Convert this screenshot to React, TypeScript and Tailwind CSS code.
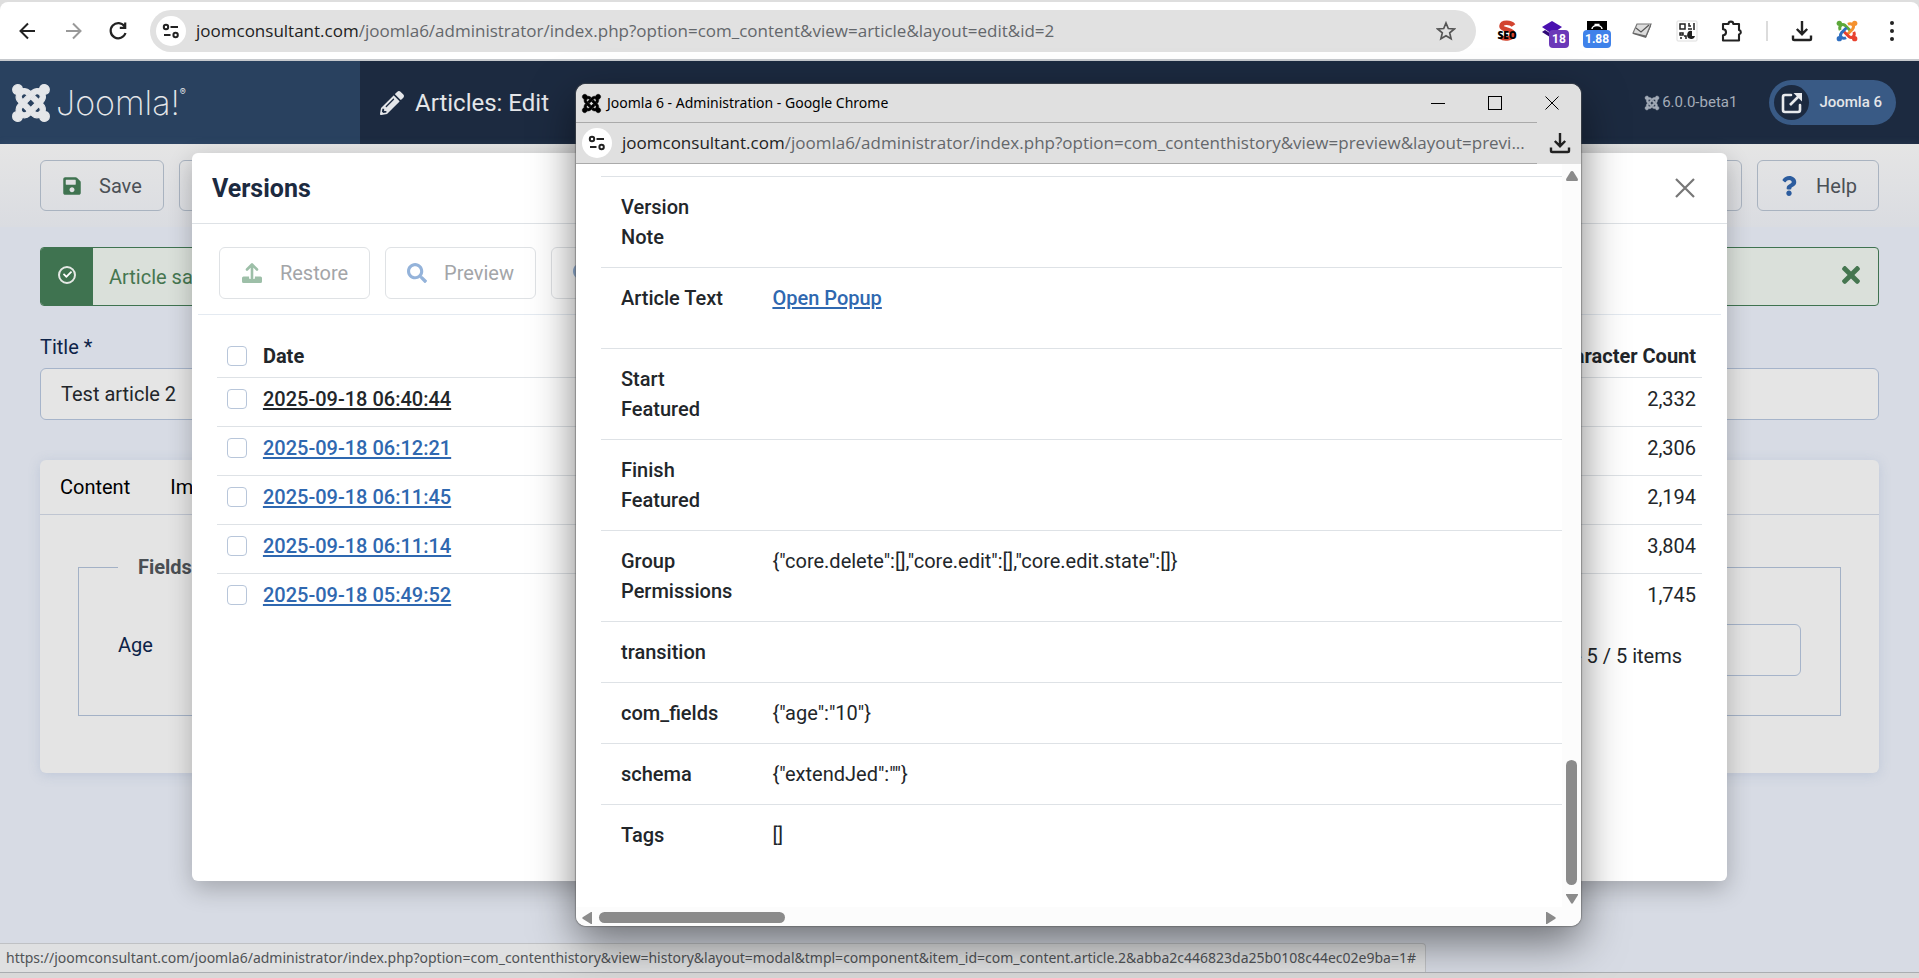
import type { ReactNode } from "react";
import { FaCheck, FaJoomla, FaPencilAlt, FaQuestion, FaSave, FaSearch, FaTimes } from "react-icons/fa";

const versions = [
  { date: "2025-09-18 06:40:44", count: "2,332", current: true },
  { date: "2025-09-18 06:12:21", count: "2,306" },
  { date: "2025-09-18 06:11:45", count: "2,194" },
  { date: "2025-09-18 06:11:14", count: "3,804" },
  { date: "2025-09-18 05:49:52", count: "1,745" },
];

const fields: { label: string; value?: ReactNode; tall?: boolean }[] = [
  { label: "Version Note" },
  {
    label: "Article Text",
    value: (
      <a href="#" className="font-medium text-[#2f68b0] underline decoration-2 underline-offset-2">
        Open Popup
      </a>
    ),
    tall: true,
  },
  { label: "Start Featured" },
  { label: "Finish Featured" },
  { label: "Group Permissions", value: '{"core.delete":[],"core.edit":[],"core.edit.state":[]}' },
  { label: "transition" },
  { label: "com_fields", value: '{"age":"10"}' },
  { label: "schema", value: '{"extendJed":""}' },
  { label: "Tags", value: "[]" },
];

function TuneIcon() {
  return (
    <span className="flex size-[30px] shrink-0 items-center justify-center rounded-full bg-white">
      <svg viewBox="0 0 18 18" className="size-[18px]" fill="none" stroke="#222" strokeWidth="2">
        <circle cx="4" cy="5" r="2.2" />
        <path d="M8.5 5H16M2 13h6.5" />
        <circle cx="13.6" cy="13" r="2.2" />
      </svg>
    </span>
  );
}

function DownloadIcon() {
  return (
    <svg viewBox="0 0 22 22" className="size-[22px]" fill="none" stroke="#222" strokeWidth="2.4">
      <path d="M11 1v13M5.8 9l5.2 5.2L16.2 9M2 15.5v3.2c0 .8.5 1.3 1.3 1.3h15.4c.8 0 1.3-.5 1.3-1.3v-3.2" />
    </svg>
  );
}

function UploadIcon() {
  return (
    <svg viewBox="0 0 22 22" className="size-[22px]" fill="none" stroke="#9dbfa8" strokeWidth="2.6">
      <path d="M11 16V3M6 7.5l5-5 5 5" strokeLinecap="round" strokeLinejoin="round" />
      <path d="M2.5 14.5h5.6v2.3h5.8v-2.3h5.6A1.5 1.5 0 0 1 21 16v3.5a1.5 1.5 0 0 1-1.5 1.5h-17A1.5 1.5 0 0 1 1 19.5V16a1.5 1.5 0 0 1 1.5-1.5z" fill="#9dbfa8" stroke="none" />
    </svg>
  );
}

function JoomlaColorIcon() {
  const parts = [
    { color: "#5da83a", angle: 0 },
    { color: "#f4912e", angle: 90 },
    { color: "#e8422f", angle: 180 },
    { color: "#2f6fc0", angle: 270 },
  ];
  return (
    <svg viewBox="0 0 24 24" className="size-[22px]" fill="none">
      {parts.map((p) => (
        <g key={p.angle} transform={`rotate(${p.angle} 12 12)`}>
          <circle cx="3.6" cy="3.6" r="2.9" fill={p.color} />
          <path d="M4.6 11C2.8 7.5 6 2.8 10 6l5.5 5.5" stroke={p.color} strokeWidth="3.2" />
        </g>
      ))}
    </svg>
  );
}

function BrowserBar() {
  return (
    <div className="bg-[#dedede] pt-[2px]">
      <div className="flex h-[59px] items-center rounded-t-lg border-b-2 border-[#c6c9cd] bg-white pr-4 pl-4 font-['Open_Sans','Noto_Sans',sans-serif]">
        <nav className="flex items-center gap-[21px]">
          <button aria-label="Back" className="size-6">
            <svg viewBox="0 0 24 24" fill="none" stroke="#222" strokeWidth="2"><path d="M19 12H5M12 4.5 4.5 12l7.5 7.5" /></svg>
          </button>
          <button aria-label="Forward" className="size-6">
            <svg viewBox="0 0 24 24" fill="none" stroke="#999" strokeWidth="2"><path d="M5 12h14M12 4.5l7.5 7.5-7.5 7.5" /></svg>
          </button>
          <button aria-label="Reload" className="size-6">
            <svg viewBox="0 0 24 24" fill="none" stroke="#222" strokeWidth="2.2"><path d="M18.6 7.5A7.6 7.6 0 1 0 19.5 14M19.2 3.5v5.300h-5.400" /></svg>
          </button>
        </nav>
        <div className="ml-5 flex h-[42px] flex-1 items-center rounded-full bg-[#e1e1e1] pr-5 pl-[6px]">
          <TuneIcon />
          <span className="ml-[10px] flex-1 text-[17px] text-[#64676b]">
            <span className="text-[#222]">joomconsultant.com</span>/joomla6/administrator/index.php?option=com_content&amp;view=article&amp;layout=edit&amp;id=2
          </span>
          <button aria-label="Bookmark" className="size-5">
            <svg viewBox="0 0 20 20" fill="none" stroke="#555" strokeWidth="1.7"><path d="m10 2 2.3 5.5 6 .5-4.6 3.9 1.4 5.9L10 14.700l-5.100 3.100 1.400-5.900L1.700 8l6-.5z" /></svg>
          </button>
        </div>
        <div className="ml-5 flex items-center gap-[23px]">
          <span className="relative flex size-[22px] items-end justify-center">
            <svg viewBox="0 0 22 22" className="absolute size-[22px]" fill="none" stroke="#d2442f" strokeWidth="4.5">
              <path d="M17.500 5.500C15 2 6 1.500 5.500 6c-.5 4 12 3.500 12 8s-9 6-13 3" />
            </svg>
            <span className="relative text-[10px] leading-[14px] font-extrabold text-black">SEO</span>
          </span>
          <span className="relative size-[22px]">
            <svg viewBox="0 0 22 22" className="size-[22px]"><path d="m11 1 10 6-10 7L1 7z" fill="#4a10b0" /><path d="m1 12 3-2 8 5v4z" fill="#2f0a78" /></svg>
            <span className="absolute top-[10px] left-2 rounded bg-[#6b38b8] px-[3px] font-[Roboto] text-xs leading-[18px] font-bold text-white">18</span>
          </span>
          <span className="relative size-[22px]">
            <svg viewBox="0 0 22 22" className="size-[22px]"><path d="M1 1h20v14H1z" fill="#000" /><path d="M6 9a5 3.500 0 0 1 10 0M8.500 4.500h5" fill="none" stroke="#fff" strokeWidth="1.5" /></svg>
            <span className="absolute top-[10px] -left-[3px] rounded bg-[#3f82ea] px-[2px] font-[Roboto] text-xs leading-[18px] font-bold text-white">1.88</span>
          </span>
          <svg viewBox="0 0 22 22" className="size-[22px]" fill="#ddd" stroke="#777" strokeWidth="1.2">
            <path d="M6 4h14l-5 12-13-3z" /><path d="m5 8 5 4 8-7" fill="none" stroke="#555" /><path d="m2 13 13 3 5-12v2l-5 12-13-4z" fill="#666" stroke="none" />
          </svg>
          <svg viewBox="0 0 22 22" className="size-[22px]" fill="none" stroke="#222" strokeWidth="1.5">
            <rect x="1" y="1" width="20" height="20" rx="1" stroke="#ddd" strokeWidth="1" />
            <path d="M4 4h5v5H4zM4 13h3v2H4zM8 16h2v3M4 18h2M13 3v3h2M18 3v7M12 9h4" />
            <path d="M16 11a4 4 0 1 0 3 5h-3z" fill="#222" stroke="none" />
          </svg>
          <svg viewBox="0 0 22 22" className="size-[22px]" fill="none" stroke="#222" strokeWidth="2.1" strokeLinejoin="round">
            <path d="M2 4h5.500a2.400 2.400 0 0 1 4.800 0H18v6a2.300 2.300 0 0 1 0 4.500V20.500H2v-5.300a3 3 0 0 0 0-6z" />
          </svg>
          <span className="h-5 w-[2px] bg-[#dcdcdc]" />
          <button aria-label="Downloads"><DownloadIcon /></button>
          <JoomlaColorIcon />
          <button aria-label="Menu" className="flex w-[22px] flex-col items-center gap-1">
            <span className="size-1 rounded-full bg-[#222]" />
            <span className="size-1 rounded-full bg-[#222]" />
            <span className="size-1 rounded-full bg-[#222]" />
          </button>
        </div>
      </div>
    </div>
  );
}

function AdminHeader() {
  return (
    <header className="flex h-[83px] items-center bg-[#1c2a40] text-[#e4e6e9]">
      <div className="flex h-full w-[360px] items-center gap-1 bg-[#29415f] pl-[10px]">
        <FaJoomla className="size-[42px]" stroke="currentColor" strokeWidth="14" />
        <span className="flex font-['Inter',sans-serif] text-[34px] leading-10 font-extralight">
          Joomla!<span className="text-[9px] leading-[18px] font-normal">®</span>
        </span>
      </div>
      <FaPencilAlt className="ml-5 size-6" />
      <h1 className="ml-[11px] flex-1 text-2xl">Articles: Edit</h1>
      <span className="flex items-center gap-[2px] text-[15px] text-[#a4acb8]">
        <FaJoomla className="size-4" stroke="currentColor" strokeWidth="14" />
        6.0.0-beta1
      </span>
      <a href="#" className="mr-[23px] ml-8 flex h-[45px] items-center gap-[10px] rounded-full bg-[#395a85] pr-[14px] pl-[5px] text-[15px] font-medium">
        <span className="flex size-[35px] items-center justify-center rounded-full bg-[#1c2a40]">
          <svg viewBox="0 0 22 22" className="size-[22px]" fill="none" stroke="#e8eaed" strokeWidth="2.6">
            <path d="M10 3H4a2 2 0 0 0-2 2v13a2 2 0 0 0 2 2h13a2 2 0 0 0 2-2v-5" strokeLinecap="round" />
            <path d="M9 13 18 4" />
            <path d="M12.500 1H21v8.500z" fill="#e8eaed" stroke="none" />
          </svg>
        </span>
        Joomla 6
      </a>
    </header>
  );
}

function Toolbar() {
  const button = "flex h-[51px] items-center rounded-md border border-[#a9b3c0] text-xl text-[#4b5056]";
  return (
    <div className="flex h-[83px] gap-[15px] bg-linear-to-b from-[#e5e5e5] to-[#dadce1] px-10 pt-4 shadow-[0_2px_10px_rgba(120,140,180,0.2)]">
      <button className={`${button} gap-[17px] px-[21px]`}>
        <FaSave className="size-5 text-[#3f7350]" />
        Save
      </button>
      <button aria-label="Save options" className={`${button} w-16`} />
      <span className="flex-1" />
      <button aria-label="More" className={`${button} w-16`} />
      <button className={`${button} gap-[17px] px-[21px]`}>
        <FaQuestion className="size-5 text-[#2c5c9e]" />
        Help
      </button>
    </div>
  );
}

function ArticleForm() {
  return (
    <main className="flex flex-1 flex-col bg-[#d7dbe4] px-10 pt-5 text-xl">
      <div className="flex h-[59px] overflow-hidden rounded border border-[#3f7350] bg-[#dae0da] text-[#457650]">
        <span className="flex w-[52px] items-center justify-center bg-[#3f7350] pb-1">
          <span className="flex size-[18px] items-center justify-center rounded-full border-2 border-[#e4e8e4]">
            <FaCheck className="size-[9px] text-white" />
          </span>
        </span>
        <span className="flex flex-1 items-center pl-4">Article saved.</span>
        <button aria-label="Close message" className="px-[14px] pb-1">
          <FaTimes className="size-[26px]" />
        </button>
      </div>
      <label htmlFor="title" className="mt-[26px] leading-[30px] text-[#0d2348]">Title *</label>
      <input
        id="title"
        defaultValue="Test article 2"
        className="mt-[6px] h-[52px] rounded-md border border-[#a6b4ca] bg-[#e5e5e5] px-5 text-[#22262a]"
      />
      <section className="mt-10 rounded-md bg-[#e4e4e4] shadow-[0_2px_12px_rgba(120,145,185,0.25)]">
        <div className="flex h-[55px] items-center gap-10 border-b border-[#bfc5d1] px-5 text-black">
          <button>Content</button>
          <button>Images and Links</button>
        </div>
        <div className="px-[38px] pt-[37px] pb-[57px]">
          <fieldset className="border border-[#a3b1c6] px-[39px] pb-[39px]">
            <legend className="px-5 leading-[30px] font-bold text-[#4a4f54]">Fields</legend>
            <div className="flex items-center pt-[42px]">
              <label htmlFor="age" className="w-60 pb-[10px] text-[#0d2348]">Age</label>
              <input id="age" className="h-[52px] flex-1 rounded-md border border-[#a6b4ca] bg-[#e5e5e5] px-5" />
            </div>
          </fieldset>
        </div>
      </section>
    </main>
  );
}

function Checkbox({ label }: { label: string }) {
  return (
    <input
      type="checkbox"
      aria-label={label}
      className="block size-5 appearance-none rounded border border-[#b8c6da] bg-white"
    />
  );
}

function VersionsModal() {
  const button = "flex h-[52px] items-center gap-[17px] rounded-md border border-[#dfe2e5] px-[21px] text-[#a3a5a8]";
  return (
    <section className="absolute inset-x-0 top-[153px] mx-auto h-[728px] w-4/5 rounded-md bg-white text-xl text-[#22262a] shadow-[0_8px_24px_rgba(0,0,0,0.24)]">
      <header className="flex h-[71px] items-center justify-between border-b border-[#dee2e6] pr-8 pl-5">
        <h2 className="text-[25px] font-bold text-[#1c2a40]">Versions</h2>
        <button aria-label="Close">
          <svg viewBox="0 0 20 20" className="size-5" fill="none" stroke="#777" strokeWidth="2.2"><path d="m1 1 18 18M19 1 1 19" /></svg>
        </button>
      </header>
      <div className="mx-[6px] flex h-[91px] gap-[15px] border-b border-[#e4eaf1] px-[21px] pt-[23px]">
        <button disabled className={button}><UploadIcon />Restore</button>
        <button disabled className={button}><FaSearch className="size-5 text-[#94b3da]" />Preview</button>
        <button disabled aria-label="Compare" className={`${button} w-40`}><FaSearch className="size-5 text-[#94b3da]" /></button>
      </div>
      <div className="mt-[20px] px-[25px]">
        <table className="w-full">
          <thead>
            <tr className="h-[42px] border-b border-[#dee2e6]">
              <th className="w-[46px] pl-[10px]"><Checkbox label="Select all" /></th>
              <th className="text-left font-bold">Date</th>
              <th className="pr-[6px] text-right font-bold">Character Count</th>
            </tr>
          </thead>
          <tbody>
            {versions.map((v, i) => (
              <tr key={v.date} className={i < versions.length - 1 ? "h-[49px] border-b border-[#dee2e6]" : "h-[49px]"}>
                <td className="pb-[6px] pl-[10px]"><Checkbox label={v.date} /></td>
                <td className="pb-[6px]">
                  <a
                    href="#"
                    className={`font-medium underline decoration-2 underline-offset-2 ${v.current ? "text-[#22262a]" : "text-[#2f68b0]"}`}
                  >
                    {v.date}
                  </a>
                </td>
                <td className="pr-[6px] pb-[6px] text-right">{v.count}</td>
              </tr>
            ))}
          </tbody>
        </table>
        <p className="mt-[19px] pr-5 text-right leading-[30px]">1 - 5 / 5 items</p>
      </div>
    </section>
  );
}

function PreviewWindow() {
  const thumb = "rounded-full bg-[#8b8b8b]";
  return (
    <section className="absolute top-[84px] left-[576px] flex h-[842px] w-[1005px] flex-col overflow-hidden rounded-[10px] bg-white shadow-[0_0_1px_1px_rgba(90,90,90,0.5),0_16px_44px_rgba(0,0,0,0.5)]">
      <div className="bg-[#e0e0e0]">
        <div className="flex h-[38px] items-center pr-[22px] pl-[5px]">
          <FaJoomla className="size-[21px] text-black" stroke="currentColor" strokeWidth="14" />
          <span className="ml-[5px] flex-1 font-['Noto_Sans',sans-serif] text-sm text-black">Joomla 6 - Administration - Google Chrome</span>
          <div className="flex items-center gap-[43px]">
            <button aria-label="Minimize" className="size-[14px]">
              <svg viewBox="0 0 14 14" stroke="#000"><path d="M0 7.500h14" /></svg>
            </button>
            <button aria-label="Maximize" className="size-[14px]">
              <svg viewBox="0 0 14 14" fill="none" stroke="#000"><rect x=".5" y=".5" width="13" height="13" /></svg>
            </button>
            <button aria-label="Close window" className="size-[14px]">
              <svg viewBox="0 0 14 14" stroke="#000"><path d="m.5.5 13 13M13.500.5l-13 13" /></svg>
            </button>
          </div>
        </div>
        <div className="flex h-[42px] items-center pr-[10px]">
          <div className="flex h-full min-w-0 flex-1 items-center border-y border-[#aaa] pl-[6px]">
            <TuneIcon />
            <span className="ml-[10px] font-['Open_Sans','Noto_Sans',sans-serif] text-[17px] whitespace-nowrap text-[#64676b]">
              <span className="text-[#222]">joomconsultant.com</span>/joomla6/administrator/index.php?option=com_contenthistory&amp;view=preview&amp;layout=previ...
            </span>
          </div>
          <button aria-label="Download" className="ml-3"><DownloadIcon /></button>
        </div>
      </div>
      <div className="flex flex-1">
        <div className="flex-1 pt-3 pl-[25px]">
          <table className="w-full text-xl leading-[30px] text-[#22262a]">
            <tbody>
              {fields.map((f) => (
                <tr key={f.label} className="border-t border-[#dee2e6] align-top">
                  <th scope="row" className={`w-[151px] px-5 pt-[15px] text-left font-medium ${f.tall ? "pb-[35px]" : "pb-[15px]"}`}>
                    {f.label}
                  </th>
                  <td className="px-5 pt-[15px]">{f.value}</td>
                </tr>
              ))}
            </tbody>
          </table>
        </div>
        <div className="flex w-[19px] flex-col items-center bg-[#fcfcfc] pt-[7px]">
          <svg viewBox="0 0 12 10" className="h-[10px] w-3" fill="#8b8b8b"><path d="M6 0c.8 0 1.2.4 1.6 1l4 6.500c.8 1.500.2 2.500-1.200 2.500H1.600C.2 10-.4 9 .4 7.500L4.400 1C4.800.4 5.200 0 6 0z" /></svg>
          <span className="flex-1" />
          <span className={`h-[125px] w-[11px] ${thumb}`} />
          <svg viewBox="0 0 12 10" className="mt-[9px] mb-[3px] h-[10px] w-3" fill="#8b8b8b"><path d="M0 0h12v1L7 9c-.6 1-1.400 1-2 0L0 1z" /></svg>
        </div>
      </div>
      <div className="flex h-[19px] items-start bg-[#fcfcfc] pt-[5px] pr-[25px] pl-[6px]">
        <svg viewBox="0 0 10 12" className="h-3 w-[10px]" fill="#8b8b8b"><path d="M10 0v12H9L1 7C0 6.400 0 5.600 1 5l8-5z" /></svg>
        <span className={`ml-[7px] h-[11px] w-[186px] ${thumb}`} />
        <span className="flex-1" />
        <svg viewBox="0 0 10 12" className="h-3 w-[10px]" fill="#8b8b8b"><path d="M0 0v12h1l8-5c1-.6 1-1.400 0-2L1 0z" /></svg>
      </div>
    </section>
  );
}

export default function App() {
  return (
    <div className="relative flex min-h-screen flex-col overflow-hidden font-[Roboto,sans-serif]">
      <BrowserBar />
      <AdminHeader />
      <Toolbar />
      <ArticleForm />
      <VersionsModal />
      <div className="absolute bottom-[6px] left-0 flex h-[29px] items-center rounded-tr border-t border-r border-[#bfc1c4] bg-[#dfe0e1] pr-[9px] pl-[6px] font-['Noto_Sans',sans-serif] text-sm text-[#505356]">
        https://joomconsultant.com/joomla6/administrator/index.php?option=com_contenthistory&amp;view=history&amp;layout=modal&amp;tmpl=component&amp;item_id=com_content.article.2&amp;abba2c446823da25b0108c44ec02e9ba=1#
      </div>
      <div className="h-[6px] border-t border-[#aaadb1] bg-[#d9d9d9]" />
      <PreviewWindow />
    </div>
  );
}
